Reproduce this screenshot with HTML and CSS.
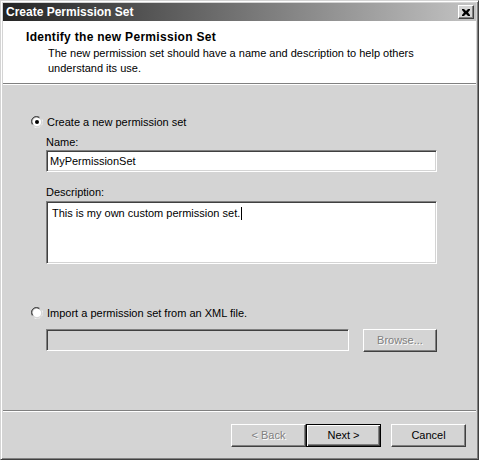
FILE: index.html
```html
<!DOCTYPE html>
<html>
<head>
<meta charset="utf-8">
<title>Create Permission Set</title>
<link rel="stylesheet" href="styles.css">
</head>
<body>
<div class="window">
  <div class="titlebar">
    <span class="title-text">Create Permission Set</span>
    <span class="close-btn">
      <svg width="8" height="7" viewBox="0 0 8 7"><path d="M0 0h2l2 2 2-2h2v1L6 3.5 8 6v1H6L4 5 2 7H0V6l2-2.5L0 1z" fill="#000"/></svg>
    </span>
  </div>
  <div class="header">
    <div class="header-title">Identify the new Permission Set</div>
    <div class="header-sub">The new permission set should have a name and description to help others understand its use.</div>
  </div>
  <div class="main">
    <div class="radio-row first">
      <svg class="radio" width="12" height="12" viewBox="0 0 12 12">
        <path d="M1 8.5A5.5 5.5 0 0 1 8.5 1" fill="none" stroke="#808080"/>
        <path d="M2 8.5A4.5 4.5 0 0 1 8.5 2" fill="none" stroke="#404040"/>
        <circle cx="6" cy="6" r="4" fill="#fff"/>
        <path d="M3.5 11A5.5 5.5 0 0 0 11 3.5" fill="none" stroke="#fff"/>
        <path d="M3.5 10A4.5 4.5 0 0 0 10 3.5" fill="none" stroke="#d4d4d4"/>
        <circle cx="6" cy="6" r="2" fill="#000"/>
      </svg>
      <span>Create a new permission set</span>
    </div>
    <div class="indent">
      <div class="label name-label">Name:</div>
      <div class="field">MyPermissionSet</div>
      <div class="label desc-label">Description:</div>
      <div class="field area">This is my own custom permission set.<span class="caret"></span></div>
    </div>
    <div class="radio-row second">
      <svg class="radio" width="12" height="12" viewBox="0 0 12 12">
        <path d="M1 8.5A5.5 5.5 0 0 1 8.5 1" fill="none" stroke="#808080"/>
        <path d="M2 8.5A4.5 4.5 0 0 1 8.5 2" fill="none" stroke="#404040"/>
        <circle cx="6" cy="6" r="4" fill="#fff"/>
        <path d="M3.5 11A5.5 5.5 0 0 0 11 3.5" fill="none" stroke="#fff"/>
        <path d="M3.5 10A4.5 4.5 0 0 0 10 3.5" fill="none" stroke="#d4d4d4"/>
      </svg>
      <span>Import a permission set from an XML file.</span>
    </div>
    <div class="indent import-row">
      <div class="field disabled"></div>
      <div class="btn browse disabled-text">Browse...</div>
    </div>
  </div>
  <div class="separator"></div>
  <div class="footer">
    <div class="btn disabled-text">&lt; Back</div>
    <div class="btn default">Next &gt;</div>
    <div class="btn cancel">Cancel</div>
  </div>
</div>
</body>
</html>
```
FILE: styles.css
```css
html, body {
  margin: 0;
  padding: 0;
  background: #d4d4d4;
}
body {
  font-family: "Liberation Sans", Arial, sans-serif;
  font-size: 11px;
  line-height: 13px;
  color: #000;
}
.window {
  width: 479px;
  height: 460px;
  box-sizing: border-box;
  border: 1px solid;
  border-color: #d4d4d4 #404040 #404040 #d4d4d4;
  box-shadow: inset 1px 1px #fff, inset -1px -1px #808080;
  padding: 2px;
  display: flex;
  flex-direction: column;
  background: #d4d4d4;
}
.titlebar {
  height: 18px;
  flex: none;
  display: flex;
  align-items: center;
  justify-content: space-between;
  background: linear-gradient(to right, #242424, #c3c3c3);
  padding: 0 2px 0 3px;
}
.title-text {
  color: #fff;
  font-weight: bold;
  font-size: 12px;
}
.close-btn {
  width: 16px;
  height: 14px;
  box-sizing: border-box;
  background: #d4d4d4;
  border: 1px solid;
  border-color: #fff #404040 #404040 #fff;
  box-shadow: inset -1px -1px #808080;
  display: flex;
  align-items: center;
  justify-content: center;
  padding-right: 1px;
}
.header {
  height: 63px;
  flex: none;
  background: #fff;
  box-sizing: border-box;
  padding: 10px 20px 0 23px;
  border-bottom: 1px solid #808080;
  box-shadow: 0 1px #fff;
}
.header-title {
  font-weight: bold;
  font-size: 12px;
  letter-spacing: 0.3px;
  height: 15px;
}
.header-sub {
  padding-left: 22px;
  line-height: 15px;
  width: 380px;
}
.main {
  flex: 1;
  padding: 31px 0 0 28px;
}
.radio-row {
  display: flex;
  align-items: center;
  gap: 4px;
  height: 14px;
}
.radio {
  flex: none;
}
.radio-row.second {
  margin-top: 42px;
}
.indent {
  margin-left: 15px;
  width: 391px;
}
.label {
  height: 13px;
}
.name-label {
  margin-top: 7px;
  margin-bottom: 1px;
}
.desc-label {
  margin-top: 14px;
  margin-bottom: 2px;
}
.field {
  box-sizing: border-box;
  height: 22px;
  background: #fff;
  border: 1px solid;
  border-color: #808080 #fff #fff #808080;
  box-shadow: inset 1px 1px #404040, inset -1px -1px #d4d4d4;
  padding: 4px 3px;
}
.field.area {
  height: 63px;
  padding: 5px 5px;
}
.caret {
  display: inline-block;
  width: 1px;
  height: 13px;
  background: #000;
  vertical-align: top;
  margin-left: 1px;
}
.import-row {
  margin-top: 9px;
  display: flex;
  gap: 14px;
  align-items: flex-start;
}
.field.disabled {
  background: #d4d4d4;
  width: 303px;
  flex: none;
}
.btn {
  box-sizing: border-box;
  width: 75px;
  height: 23px;
  border: 1px solid;
  border-color: #fff #404040 #404040 #fff;
  box-shadow: inset -1px -1px #808080;
  display: flex;
  align-items: center;
  justify-content: center;
  background: #d4d4d4;
}
.disabled-text {
  color: #808080;
  text-shadow: 1px 1px #fff;
}
.separator {
  flex: none;
  height: 1px;
  background: #808080;
  box-shadow: 0 1px #fff;
}
.footer {
  flex: none;
  height: 46px;
  display: flex;
  justify-content: flex-end;
  align-items: flex-start;
  padding: 13px 10px 0 0;
  box-sizing: border-box;
}
.btn.default {
  border: 1px solid #000;
  box-shadow: inset 1px 1px #fff, inset -1px -1px #404040, inset -2px -2px #808080;
}
.btn.cancel {
  margin-left: 10px;
}
```
